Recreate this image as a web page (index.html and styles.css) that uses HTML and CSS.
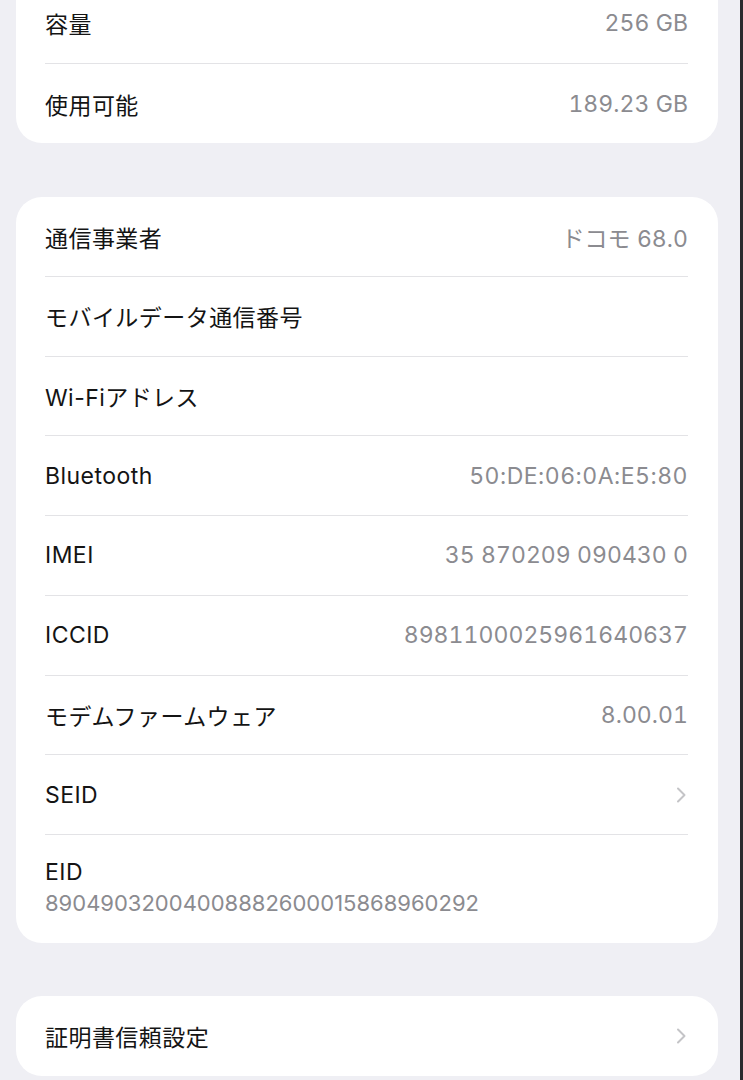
FILE: index.html
```html
<!DOCTYPE html>
<html lang="ja">
<head>
<meta charset="utf-8">
<title>情報</title>
<link rel="stylesheet" href="styles.css">
</head>
<body>
<div class="page">
  <section class="card card-top">
    <div class="row"><span class="label">容量</span><span class="value">256 GB</span></div>
    <div class="row"><span class="label">使用可能</span><span class="value">189.23 GB</span></div>
  </section>

  <section class="card card-main">
    <div class="row"><span class="label">通信事業者</span><span class="value">ドコモ 68.0</span></div>
    <div class="row"><span class="label">モバイルデータ通信番号</span><span class="value"></span></div>
    <div class="row"><span class="label">Wi-Fiアドレス</span><span class="value"></span></div>
    <div class="row"><span class="label">Bluetooth</span><span class="value mac">50:DE:06:0A:E5:80</span></div>
    <div class="row"><span class="label">IMEI</span><span class="value">35 870209 090430 0</span></div>
    <div class="row"><span class="label">ICCID</span><span class="value">8981100025961640637</span></div>
    <div class="row"><span class="label">モデムファームウェア</span><span class="value">8.00.01</span></div>
    <div class="row"><span class="label">SEID</span>
      <svg class="chev" viewBox="0 0 10 16" width="10" height="16"><path d="M2 1.5 L8.5 8 L2 14.5" fill="none" stroke="#c4c4c7" stroke-width="2" stroke-linecap="round" stroke-linejoin="round"/></svg>
    </div>
    <div class="row row-stack">
      <span class="label">EID</span>
      <span class="value sub">89049032004008882600015868960292</span>
    </div>
  </section>

  <section class="card">
    <div class="row"><span class="label">証明書信頼設定</span>
      <svg class="chev" viewBox="0 0 10 16" width="10" height="16"><path d="M2 1.5 L8.5 8 L2 14.5" fill="none" stroke="#c4c4c7" stroke-width="2" stroke-linecap="round" stroke-linejoin="round"/></svg>
    </div>
  </section>
</div>
</body>
</html>
```

FILE: styles.css
```css
* { box-sizing: border-box; }

html, body {
  margin: 0;
  padding: 0;
  background: #efeff4;
}

body {
  font-family: Inter, "Noto Sans CJK JP", sans-serif;
  font-size: 23px;
  color: #111;
  overflow: hidden;
}

.page {
  width: 743px;
  height: 1080px;
  padding: 0 22px 0 16px;
  display: flex;
  flex-direction: column;
  gap: 53px;
  border-right: 3px solid #2a2a2e;
  overflow: hidden;
}

.card {
  background: #ffffff;
  border-radius: 26px;
  padding: 0 30px 0 29px;
  flex-shrink: 0;
}

.card-top {
  margin-top: -16px;
  border-top-left-radius: 0;
  border-top-right-radius: 0;
}

.card-main {
  margin-top: 1px;
}

.row {
  height: 79.7px;
  display: flex;
  align-items: center;
  justify-content: space-between;
  border-bottom: 1.5px solid #e3e3e6;
}

.row:last-child {
  border-bottom: none;
}

.row-stack {
  height: 108px;
  flex-direction: column;
  align-items: flex-start;
  justify-content: center;
  gap: 4px;
  padding-bottom: 4px;
}

.label {
  color: #141414;
  letter-spacing: 0.45px;
}

.value {
  color: #8b8b90;
  letter-spacing: 0.05px;
  font-variant-numeric: tabular-nums;
}

.mac {
  letter-spacing: 0.5px;
}

.sub {
  font-size: 22px;
  letter-spacing: 0;
  font-variant-numeric: normal;
}

.chev {
  display: block;
  margin-right: 2px;
}
```
